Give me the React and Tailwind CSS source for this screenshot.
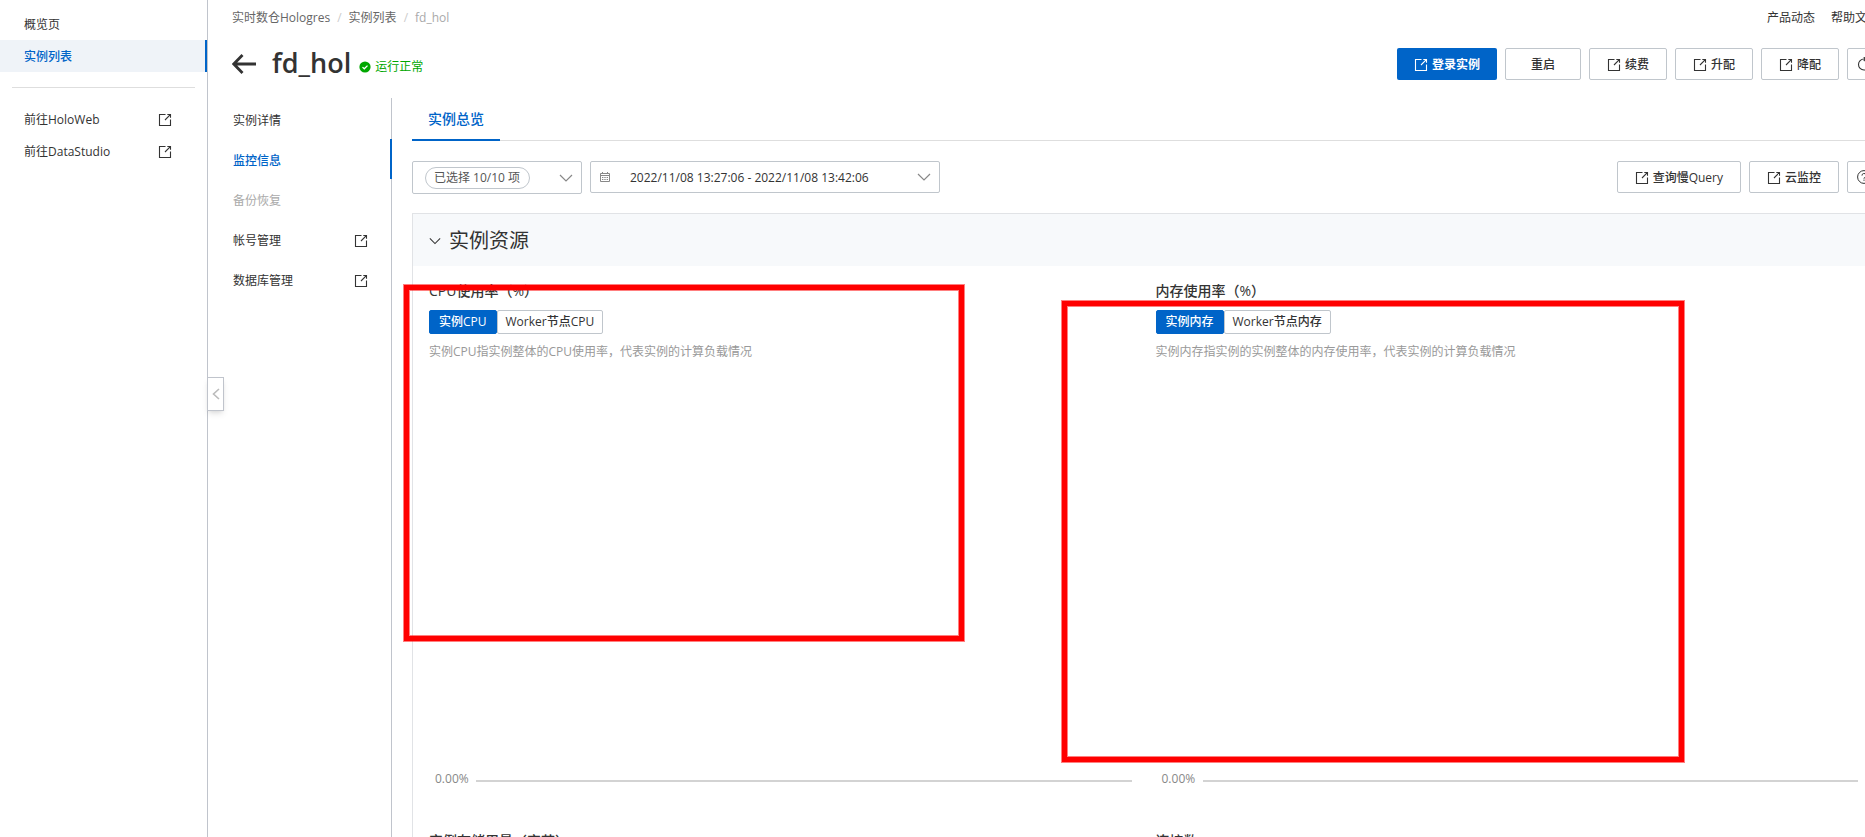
import React, { useState } from 'react';
import clsx from 'clsx';

const ExternalIcon = ({ className }) => (
  <svg viewBox="0 0 14 14" className={clsx('w-3.5 h-3.5 shrink-0', className)} fill="none" stroke="currentColor" strokeWidth="1.1" aria-hidden="true">
    <path d="M7.5 1.5H1.5V12.5H12.5V6.5" />
    <path d="M7 7L12.3 1.7M9.3 1.5H12.5V4.7" />
  </svg>
);

const ChevronDown = ({ className }) => (
  <svg viewBox="0 0 14 14" className={clsx('shrink-0', className)} fill="none" stroke="currentColor" strokeWidth="1.2" aria-hidden="true">
    <path d="M1 4L7 10L13 4" />
  </svg>
);

const BackArrow = () => (
  <svg viewBox="0 0 24 20" className="w-6 h-5" fill="none" stroke="currentColor" strokeWidth="2.8" aria-hidden="true">
    <path d="M24 10H2M10.5 1L1.8 10L10.5 19" />
  </svg>
);

const CalendarIcon = () => (
  <svg viewBox="0 0 10 10" className="w-2.5 h-2.5 shrink-0 text-[#888]" fill="none" stroke="currentColor" strokeWidth="1" aria-hidden="true">
    <path d="M0.5 1.5H9.5V9.5H0.5ZM0.5 3.5H9.5M2.5 0V2M7.5 0V2" />
    <path d="M2 5.5H8M2 7.5H8" strokeDasharray="1.4 0.9" />
  </svg>
);

const CheckBadge = () => (
  <svg viewBox="0 0 12 12" className="w-3 h-3" aria-hidden="true">
    <circle cx="6" cy="6" r="5.6" fill="#00a700" />
    <path d="M3.5 6.1L5.3 7.8L8.5 4.6" fill="none" stroke="#fff" strokeWidth="1.3" />
  </svg>
);

const RefreshIcon = () => (
  <svg viewBox="0 0 14 14" className="w-3.5 h-3.5" fill="none" stroke="currentColor" strokeWidth="1.1" aria-hidden="true">
    <path d="M12.5 7.5A5.5 5.5 0 1 1 7 2H8.5M6.8 0L8.8 2L6.8 4" />
  </svg>
);

const HelpIcon = () => (
  <svg viewBox="0 0 14 14" className="w-3.5 h-3.5" fill="none" stroke="currentColor" strokeWidth="1" aria-hidden="true">
    <circle cx="7" cy="7" r="6.4" />
    <path d="M5 5.6A2 2 0 1 1 7.8 7.3Q7 7.7 7 8.7M7 9.6V10.8" />
  </svg>
);

const btn = 'h-8 shrink-0 flex items-center justify-center gap-1 rounded-xs border border-[#c0c6cc] bg-white px-[17px] font-medium whitespace-nowrap';
const iconBtn = 'h-8 w-[34px] shrink-0 flex items-center justify-center rounded-xs border border-[#c0c6cc] bg-white';

const menu = [
  { label: '实例详情' },
  { label: '监控信息', active: true },
  { label: '备份恢复', disabled: true },
  { label: '帐号管理', external: true },
  { label: '数据库管理', external: true },
];

const charts = [
  { title: 'CPU使用率（%）', tabs: ['实例CPU', 'Worker节点CPU'], desc: '实例CPU指实例整体的CPU使用率，代表实例的计算负载情况' },
  { title: '内存使用率（%）', tabs: ['实例内存', 'Worker节点内存'], desc: '实例内存指实例的实例整体的内存使用率，代表实例的计算负载情况' },
  { title: '实例存储用量（字节）' },
  { title: '连接数' },
];

const Sidebar = () => (
  <aside className="w-[208px] shrink-0 border-r border-[#c0c4cc] pt-2">
    <nav>
      <a href="#overview" className="flex h-8 items-center pl-6 pt-0.5">概览页</a>
      <a href="#instances" className="flex h-8 items-center border-r-2 border-[#0064c8] bg-[#eff3f8] pl-6 pt-0.5 font-medium text-[#0064c8]">实例列表</a>
      <hr className="my-[15px] mx-3 border-[#dedede]" />
      <a href="#holoweb" className="flex h-8 items-center justify-between pl-6 pr-[35px] pt-0.5">前往HoloWeb<ExternalIcon /></a>
      <a href="#datastudio" className="flex h-8 items-center justify-between pl-6 pr-[35px] pt-0.5">前往DataStudio<ExternalIcon /></a>
    </nav>
  </aside>
);

const SubMenu = () => (
  <nav className="w-[160px] shrink-0 border-r border-[#c0c4cc] pt-px">
    {menu.map((item) => (
      <a
        key={item.label}
        href="#menu"
        className={clsx(
          'flex h-10 items-center justify-between pt-1 pl-px pr-[23px]',
          item.active && '-mr-px border-r-2 border-[#0064c8] font-medium text-[#0064c8]',
          item.disabled && 'text-[#aaa]'
        )}
      >
        {item.label}
        {item.external && <ExternalIcon />}
      </a>
    ))}
  </nav>
);

const ChartCard = ({ title, tabs, desc }) => {
  const [current, setCurrent] = useState(0);

  return (
    <section className="h-[550px] min-w-0 flex flex-col">
      <h3 className="text-sm leading-5 font-medium">{title}</h3>
      {tabs && (
        <>
          <div className="mt-[9px] flex">
            {tabs.map((tab, i) => (
              <button
                key={tab}
                type="button"
                onClick={() => setCurrent(i)}
                className={clsx(
                  'h-6 border font-medium rounded-xs',
                  i === current ? 'border-[#0064c8] bg-[#0064c8] text-white px-[9px]' : 'border-[#c0c6cc] bg-white px-2'
                )}
              >
                {tab}
              </button>
            ))}
          </div>
          <p className="mt-2 leading-5 text-[#999]">{desc}</p>
          {/* y axis label and zero line */}
          <div className="mt-auto mb-[42px] flex h-5 items-center gap-2 pl-1.5 pr-6 text-[#888]">
            <span className="w-[33px]">0.00%</span>
            <span className="mt-1 h-0.5 flex-1 bg-[#d3d3d3]" />
          </div>
        </>
      )}
    </section>
  );
};

const Monitor = () => (
  <div className="ml-5 min-w-0 flex-1">
    <div className="flex border-b border-[#dedede]">
      <button type="button" className="-mb-px h-[43px] border-b-2 border-[#0064c8] px-4 text-sm font-medium text-[#0064c8]">实例总览</button>
    </div>

    <div className="mt-5 flex items-start gap-2 pr-0.5">
      <div className="flex h-[33px] w-[170px] items-center justify-between rounded-xs border border-[#c0c6cc] pl-3 pr-2">
        <select aria-label="监控指标" className="h-[22px] appearance-none rounded-full border border-[#c0c6cc] bg-white px-2 text-[#555]">
          <option>已选择 10/10 项</option>
        </select>
        <ChevronDown className="w-3.5 h-3.5 text-[#888]" />
      </div>
      <label className="flex h-8 w-[350px] items-center rounded-xs border border-[#c0c6cc] pl-[9px] pr-2">
        <CalendarIcon />
        <input
          aria-label="时间范围"
          readOnly
          value="2022/11/08 13:27:06 - 2022/11/08 13:42:06"
          className="ml-5 min-w-0 flex-1 pt-0.5 outline-none"
        />
        <ChevronDown className="w-3.5 h-3.5 text-[#888]" />
      </label>
      <div className="ml-auto flex gap-2">
        <button type="button" className={clsx(btn, 'pt-0.5')}><ExternalIcon />查询慢Query</button>
        <button type="button" className={clsx(btn, 'pt-0.5')}><ExternalIcon />云监控</button>
        <button type="button" aria-label="帮助" className={iconBtn}><HelpIcon /></button>
      </div>
    </div>

    <div className="mt-[19px] border border-[#e1e3e6]">
      <h2 className="flex h-[52px] items-center gap-2 bg-[#f7f9fb] pl-4 pt-0.5 text-xl font-normal">
        <ChevronDown className="w-3 h-3" />
        实例资源
      </h2>
      <div className="grid grid-cols-2 pl-4 pt-[15px]">
        {charts.map((chart) => (
          <ChartCard key={chart.title} {...chart} />
        ))}
      </div>
    </div>
  </div>
);

export default function App() {
  return (
    <div className="relative flex h-screen overflow-hidden bg-white font-['Open_Sans','Noto_Sans_CJK_SC',sans-serif] text-xs text-[#333]">
      <Sidebar />

      <main className="min-w-0 flex-1 overflow-hidden pl-6">
        {/* content runs a little past the window's right edge */}
        <div className="-mr-[18px] flex h-full flex-col">
          <div className="flex h-9 shrink-0 items-center justify-between pr-1">
            <nav className="flex items-center gap-[7px] text-[#666]">
              <a href="#hologres">实时数仓Hologres</a>
              <span className="text-[#ccc]">/</span>
              <a href="#instances">实例列表</a>
              <span className="text-[#ccc]">/</span>
              <span className="text-[#aaa]">fd_hol</span>
            </nav>
            <div className="flex gap-4">
              <a href="#news">产品动态</a>
              <a href="#docs">帮助文档</a>
            </div>
          </div>

          <header className="mt-3 flex h-8 shrink-0 items-center justify-between pr-0.5">
            <div className="flex items-center">
              <button type="button" aria-label="返回"><BackArrow /></button>
              <h1 className="ml-4 pb-0.5 text-[27px] leading-8 font-semibold">fd_hol</h1>
              <span className="ml-2 mt-1.5 flex items-center gap-1 text-[#00a700]"><CheckBadge />运行正常</span>
            </div>
            <div className="flex gap-2">
              <button type="button" className="flex h-8 shrink-0 items-center gap-1 rounded-xs bg-[#0064c8] px-[17px] pt-0.5 font-bold text-white"><ExternalIcon />登录实例</button>
              <button type="button" className={clsx(btn, 'w-[76px] pt-0.5')}>重启</button>
              <button type="button" className={clsx(btn, 'pt-0.5')}><ExternalIcon />续费</button>
              <button type="button" className={clsx(btn, 'pt-0.5')}><ExternalIcon />升配</button>
              <button type="button" className={clsx(btn, 'pt-0.5')}><ExternalIcon />降配</button>
              <button type="button" aria-label="刷新" className={iconBtn}><RefreshIcon /></button>
            </div>
          </header>

          <div className="mt-[18px] flex min-h-0 flex-1">
            <SubMenu />
            <Monitor />
          </div>
        </div>
      </main>

      {/* collapse handle of the side bar */}
      <button type="button" aria-label="收起" className="absolute left-[207px] top-[377px] flex h-[34px] w-[17px] items-center justify-center border border-[#c0c4cc] bg-white text-[#bbb] shadow-md">
        <svg viewBox="0 0 10 12" className="w-2.5 h-3" fill="none" stroke="currentColor" strokeWidth="1.6" aria-hidden="true">
          <path d="M8 1L2.5 6L8 11" />
        </svg>
      </button>

      {/* red marks drawn over the empty charts */}
      <div className="pointer-events-none absolute left-[404px] top-[285px] h-[356px] w-[560px] border-5 border-[#ff0000] shadow-[0_0_0_1px_#ff000080,inset_0_0_0_1px_#ff000080]" />
      <div className="pointer-events-none absolute left-[1062px] top-[301px] h-[461px] w-[622px] border-5 border-[#ff0000] shadow-[0_0_0_1px_#ff000080,inset_0_0_0_1px_#ff000080]" />
    </div>
  );
}
